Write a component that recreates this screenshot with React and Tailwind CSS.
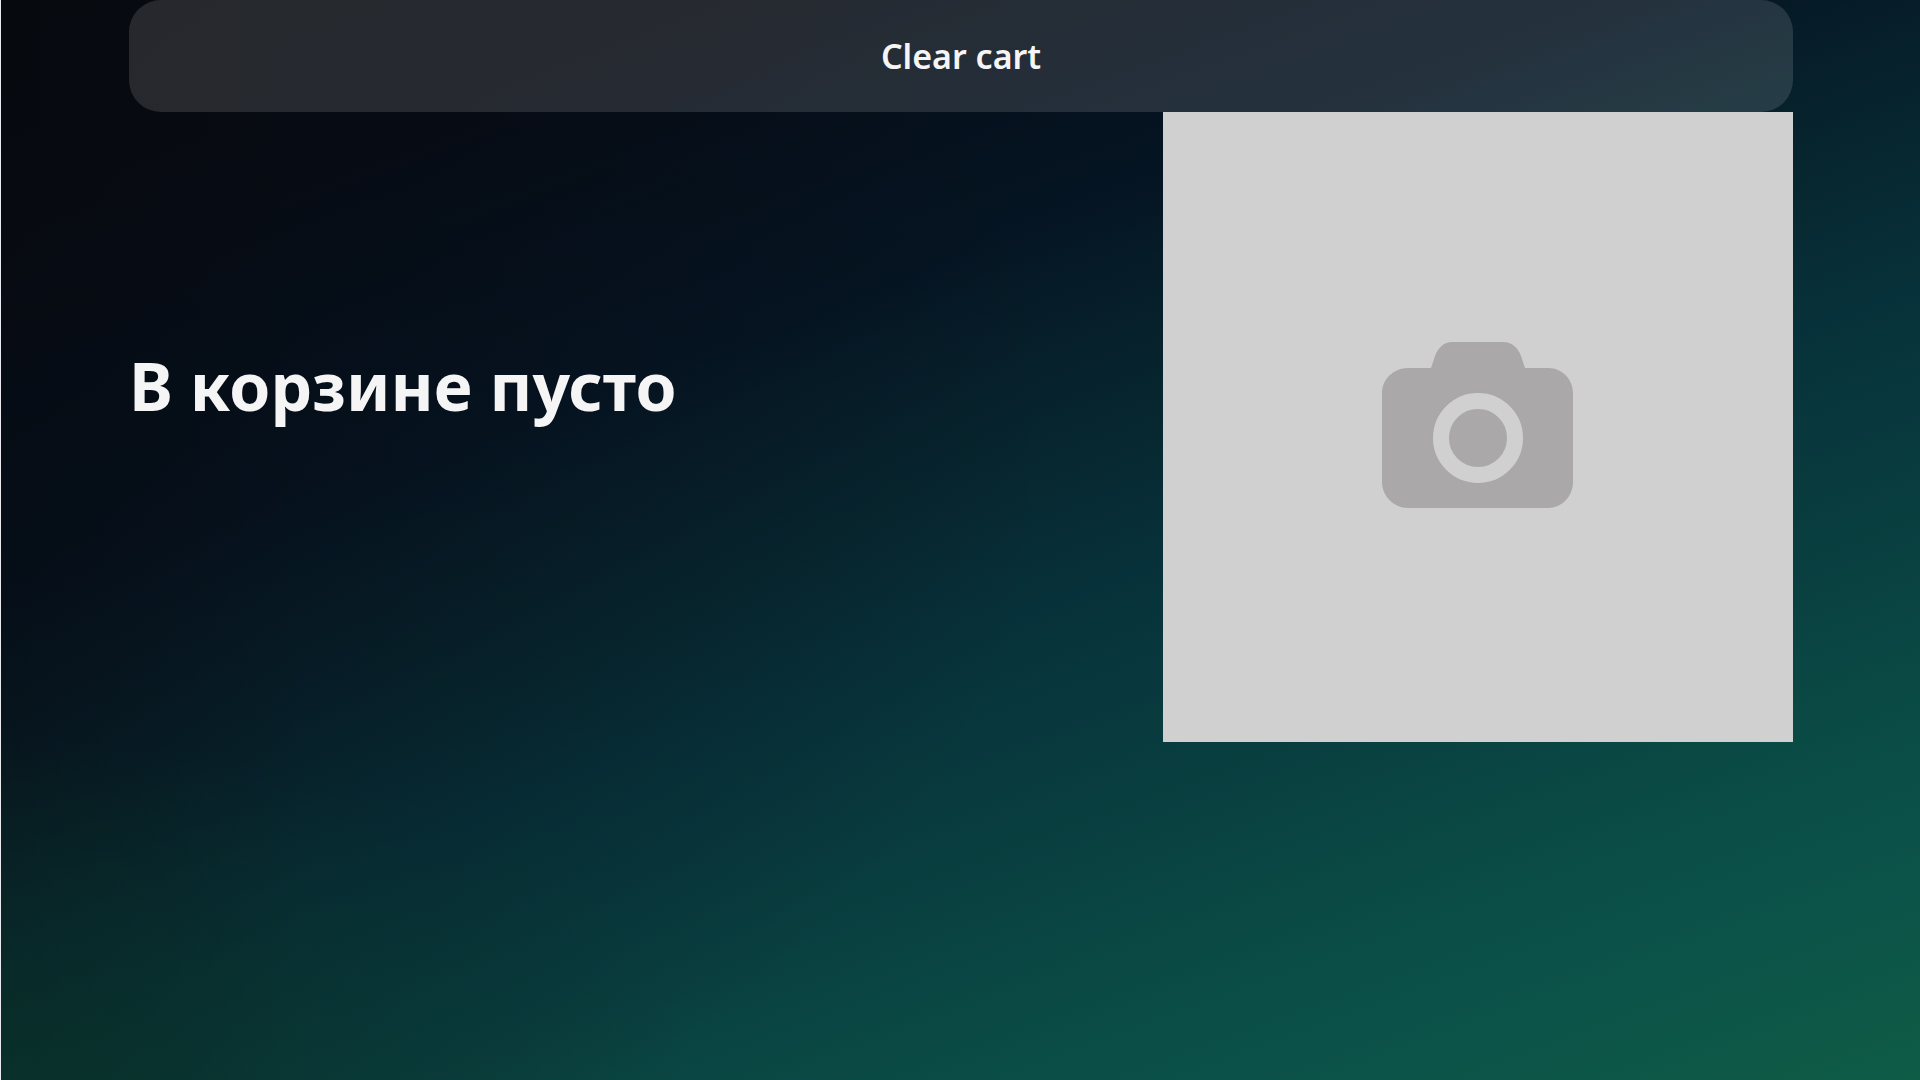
export default function App() {
  return (
    <div className="min-h-screen border-l border-[#e8eaf0] bg-[radial-gradient(36%_32%_at_0%_100%,#0a3428a6_0%,#0a342800_100%),radial-gradient(55%_75%_at_0%_40%,#060a1280_0%,#060a1240_50%,#060a1200_100%),linear-gradient(90deg,#07080a40_0%,#07080a00_16%),linear-gradient(160deg,#070a0e_0%,#070b13_14%,#05111d_26%,#051523_34%,#061d29_39%,#072831_48%,#07313a_55%,#093f40_69%,#0a4844_76%,#0b5149_86%,#0d5847_95%,#0e5c46_100%)] font-['Noto_Sans',sans-serif] text-[#f5f5f5]">
      <main className="pl-32 pr-[127px]">
        <button
          type="button"
          className="flex h-28 w-full items-center justify-center rounded-4xl bg-[#f5f5f5]/13 text-[34px] leading-none font-semibold"
        >
          Clear cart
        </button>
        <section className="flex items-center justify-between">
          <h1 className="mb-21 text-[66px] leading-[72px] font-bold">В корзине пусто</h1>
          <div className="flex aspect-square w-[630px] items-center justify-center bg-[#d0d0d0]">
            <svg viewBox="0 0 192 166" className="mb-1 w-48" role="img" aria-label="Нет фото">
              <path
                fill="#aaa8a9"
                d="M49 26L53 14C56 6 62 0 70 0H121C130 0 136 6 139 14L143 26H166C180 26 191 37 191 51V140C191 154 180 166 166 166H26C12 166 0 154 0 140V51C0 37 12 26 26 26Z"
              />
              <circle cx="96" cy="96" r="37" fill="none" stroke="#d0d0d0" strokeWidth="16" />
            </svg>
          </div>
        </section>
      </main>
    </div>
  );
}
